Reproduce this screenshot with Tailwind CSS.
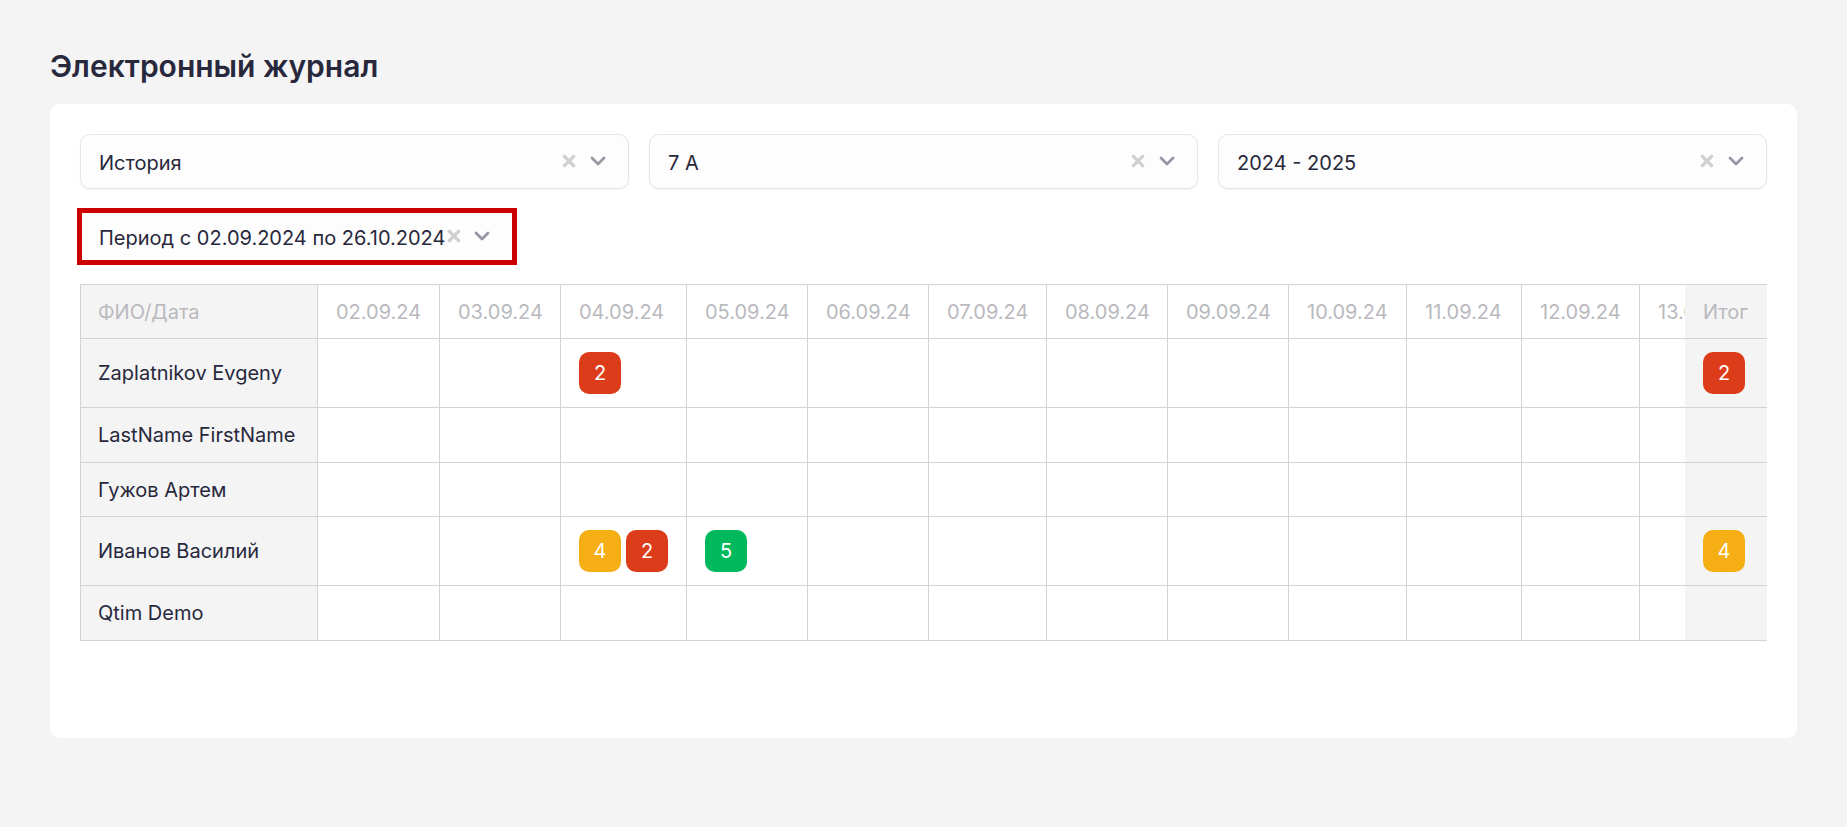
<!DOCTYPE html>
<html lang="ru">
<head>
<meta charset="utf-8">
<title>Электронный журнал</title>
<script src="https://cdn.jsdelivr.net/npm/@tailwindcss/browser@4"></script>
</head>
<body class="min-h-screen bg-[#f4f4f4] font-['Inter',sans-serif] text-[20px] text-[#28283c]">
<svg class="hidden">
  <symbol id="x" viewBox="0 0 14 14"><path d="M2.4 2.4l9.2 9.2M11.6 2.4l-9.2 9.2" fill="none" stroke="currentColor" stroke-width="3.4" stroke-linecap="round"/></symbol>
  <symbol id="chev" viewBox="0 0 16 10"><path d="M2 2l6 6 6-6" fill="none" stroke="currentColor" stroke-width="2.8" stroke-linecap="round" stroke-linejoin="round"/></symbol>
</svg>
<main class="px-[50px] pt-[46px] pb-10">
  <h1 class="text-[30px] leading-[40px] font-semibold">Электронный журнал</h1>
  <section class="mt-[18px] rounded-[10px] bg-white px-[30px] pt-[30px] pb-[97px]">
    <div class="grid grid-cols-3 gap-5">
      <div class="relative">
        <select aria-label="Предмет" class="block h-[55px] w-full appearance-none rounded-[10px] border border-[#e6e6e8] bg-[#fdfdfd] pt-[2px] pl-[18px] shadow-xs"><option>История</option></select>
        <button type="button" aria-label="Очистить предмет" class="absolute top-[20px] right-[53px] text-[#d0d0d0]"><svg class="h-[14px] w-[14px]"><use href="#x"/></svg></button>
        <svg class="pointer-events-none absolute top-[22px] right-[23px] h-[10px] w-[16px] text-[#9696a5]"><use href="#chev"/></svg>
      </div>
      <div class="relative">
        <select aria-label="Класс" class="block h-[55px] w-full appearance-none rounded-[10px] border border-[#e6e6e8] bg-[#fdfdfd] pt-[2px] pl-[18px] shadow-xs"><option>7 А</option></select>
        <button type="button" aria-label="Очистить класс" class="absolute top-[20px] right-[53px] text-[#d0d0d0]"><svg class="h-[14px] w-[14px]"><use href="#x"/></svg></button>
        <svg class="pointer-events-none absolute top-[22px] right-[23px] h-[10px] w-[16px] text-[#9696a5]"><use href="#chev"/></svg>
      </div>
      <div class="relative">
        <select aria-label="Учебный год" class="block h-[55px] w-full appearance-none rounded-[10px] border border-[#e6e6e8] bg-[#fdfdfd] pt-[2px] pl-[18px] shadow-xs"><option>2024 - 2025</option></select>
        <button type="button" aria-label="Очистить учебный год" class="absolute top-[20px] right-[53px] text-[#d0d0d0]"><svg class="h-[14px] w-[14px]"><use href="#x"/></svg></button>
        <svg class="pointer-events-none absolute top-[22px] right-[23px] h-[10px] w-[16px] text-[#9696a5]"><use href="#chev"/></svg>
      </div>
    </div>
    <div class="relative -mx-[3px] mt-[19px] w-[440px] max-w-full border-[5px] border-[#cc0000]">
      <select aria-label="Период" class="block h-[47px] w-full appearance-none bg-[#fdfdfd] pt-[2px] pl-[17px]"><option>Период с 02.09.2024 по 26.10.2024</option></select>
      <button type="button" aria-label="Очистить период" class="absolute top-[16px] right-[51px] text-[#d0d0d0]"><svg class="h-[14px] w-[14px]"><use href="#x"/></svg></button>
      <svg class="pointer-events-none absolute top-[18px] right-[22px] h-[10px] w-[16px] text-[#9696a5]"><use href="#chev"/></svg>
    </div>
    <div class="mt-[19px] overflow-x-auto border-l border-[#d2d2d7] [scrollbar-width:none]">
      <table id="journal" class="w-max border-separate border-spacing-0 border-t border-[#d2d2d7] whitespace-nowrap">
        <thead></thead>
        <tbody></tbody>
      </table>
    </div>
  </section>
</main>
<script>
const widths = [122, 121, 126, 121, 121, 118, 121, 121, 118, 115, 118, 118];
const dates = widths.map((w, i) => String(i + 2).padStart(2, '0') + '.09.24');
const colors = {2: 'bg-[#dc3c19]', 4: 'bg-[#f5af14]', 5: 'bg-[#00b95c]'};
const rows = [
  {name: 'Zaplatnikov Evgeny', marks: {2: [2]}, total: 2, h: 'h-[69px]'},
  {name: 'LastName FirstName', marks: {}, h: 'h-[55px]'},
  {name: 'Гужов Артем', marks: {}, h: 'h-[54px]'},
  {name: 'Иванов Василий', marks: {2: [4, 2], 3: [5]}, total: 4, h: 'h-[69px]'},
  {name: 'Qtim Demo', marks: {}, h: 'h-[55px]'}
];
const cell = 'border-b border-[#d2d2d7] text-left font-normal';
const first = cell + ' sticky left-0 z-10 min-w-[237px] border-r bg-[#f4f4f4] px-[17px]';
const date = cell + ' border-r pr-2 pl-[18px]';
const last = cell + ' sticky right-0 z-10 min-w-[82px] bg-[#f4f4f4] px-[18px]';
const mark = m => `<span class="flex size-[42px] items-center justify-center rounded-[10px] text-white ${colors[m]}">${m}</span>`;
const marks = list => list.length ? `<div class="flex gap-[5px]">${list.map(mark).join('')}</div>` : '';
document.querySelector('#journal thead').innerHTML =
  `<tr class="h-[54px] text-[#b9b9be]"><th scope="col" class="${first}">ФИО/Дата</th>` +
  dates.map((d, i) => `<th scope="col" class="${date}" style="min-width:${widths[i]}px">${d}</th>`).join('') +
  `<th scope="col" class="${last}">Итог</th></tr>`;
document.querySelector('#journal tbody').innerHTML = rows.map(r =>
  `<tr class="${r.h}"><th scope="row" class="${first}">${r.name}</th>` +
  dates.map((d, i) => `<td class="${date}">${marks(r.marks[i] || [])}</td>`).join('') +
  `<td class="${last}">${marks(r.total ? [r.total] : [])}</td></tr>`).join('');
</script>
</body>
</html>
